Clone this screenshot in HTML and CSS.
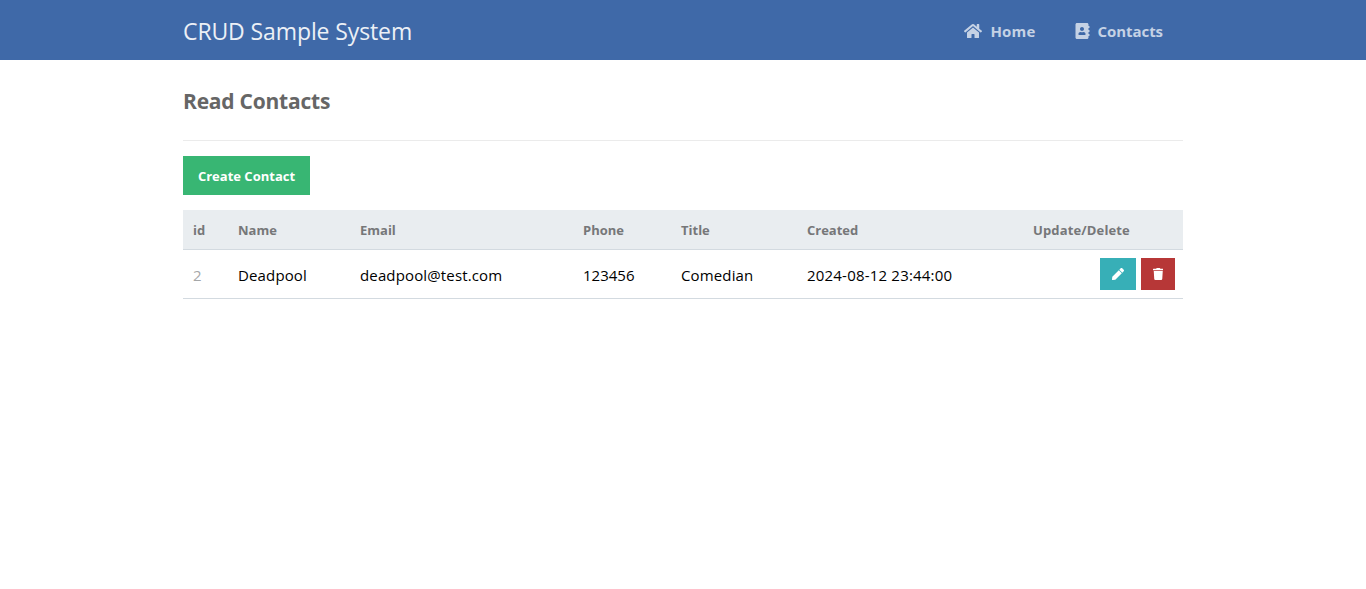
FILE: index.html
```html
<!DOCTYPE html>
<html lang="en">
<head>
<meta charset="utf-8">
<title>Read Contacts</title>
<link rel="stylesheet" href="styles.css">
</head>
<body>
<nav class="navtop">
  <div class="navtop-inner">
    <h1 class="brand">CRUD Sample System</h1>
    <a class="nav-link home" href="#"><svg class="icon-home" viewBox="0 0 576 512"><path d="M280.37 148.26L96 300.11V464a16 16 0 0 0 16 16l112.06-.29a16 16 0 0 0 15.92-16V368a16 16 0 0 1 16-16h64a16 16 0 0 1 16 16v95.64a16 16 0 0 0 16 16.05L464 480a16 16 0 0 0 16-16V300L295.67 148.26a12.19 12.19 0 0 0-15.3 0zM571.6 251.47L488 182.56V44.05a12 12 0 0 0-12-12h-56a12 12 0 0 0-12 12v72.61L318.47 43a48 48 0 0 0-61 0L4.34 251.47a12 12 0 0 0-1.6 16.9l25.5 31A12 12 0 0 0 45.15 301l235.22-193.74a12.19 12.19 0 0 1 15.3 0L530.9 301a12 12 0 0 0 16.9-1.6l25.5-31a12 12 0 0 0-1.7-16.93z"/></svg><span>Home</span></a>
    <a class="nav-link contacts" href="#"><svg class="icon-book" viewBox="0 0 448 512"><path d="M436 160c6.600 0 12-5.400 12-12v-40c0-6.600-5.400-12-12-12h-20V48c0-26.500-21.500-48-48-48H48C21.500 0 0 21.500 0 48v416c0 26.500 21.500 48 48 48h320c26.500 0 48-21.500 48-48v-48h20c6.600 0 12-5.400 12-12v-40c0-6.600-5.400-12-12-12h-20v-64h20c6.600 0 12-5.400 12-12v-40c0-6.600-5.400-12-12-12h-20v-64h20zm-228-32c35.300 0 64 28.700 64 64s-28.700 64-64 64-64-28.700-64-64 28.700-64 64-64zm112 236.800c0 10.600-10 19.200-22.400 19.200H118.400C106 384 96 375.400 96 364.800v-19.200c0-31.800 30.100-57.600 67.200-57.600h5c12.300 5.100 25.700 8 39.800 8s27.600-2.900 39.800-8h5c37.100 0 67.200 25.800 67.200 57.600v19.200z"/></svg><span>Contacts</span></a>
  </div>
</nav>
<main class="content">
  <h2 class="title"><span>Read Contacts</span></h2>
  <a class="create" href="#">Create Contact</a>
  <table class="contacts-table">
    <colgroup><col class="c-id"><col class="c-name"><col class="c-email"><col class="c-phone"><col class="c-title"><col class="c-created"><col></colgroup>
    <thead>
      <tr><th>id</th><th>Name</th><th>Email</th><th>Phone</th><th>Title</th><th>Created</th><th class="wide">Update/Delete</th></tr>
    </thead>
    <tbody>
      <tr>
        <td class="muted">2</td><td>Deadpool</td><td>deadpool@test.com</td><td class="phone">123456</td><td>Comedian</td><td class="date">2024-08-12 23:44:00</td>
        <td class="actions"><div class="buttons">
          <a class="btn edit" href="#"><svg class="icon-pen" viewBox="0 0 512 512"><path d="M290.74 93.24l128.02 128.02-277.99 277.99-114.14 12.6C11.35 513.54-1.56 500.62.14 485.34l12.7-114.22 277.9-277.88zm207.2-19.06l-60.11-60.11c-18.75-18.75-49.16-18.75-67.91 0l-56.55 56.55 128.02 128.02 56.55-56.55c18.75-18.76 18.75-49.16 0-67.91z"/></svg></a>
          <a class="btn trash" href="#"><svg class="icon-trash" viewBox="0 0 448 512"><path d="M432 32H312l-9.4-18.7A24 24 0 0 0 281.1 0H166.8a23.72 23.72 0 0 0-21.4 13.3L136 32H16A16 16 0 0 0 0 48v32a16 16 0 0 0 16 16h416a16 16 0 0 0 16-16V48a16 16 0 0 0-16-16zM53.2 467a48 48 0 0 0 47.9 45h245.8a48 48 0 0 0 47.9-45L416 128H32z"/></svg></a>
        </div></td>
      </tr>
    </tbody>
  </table>
</main>
</body>
</html>
```
FILE: styles.css
```css
* { box-sizing: border-box; }
body { margin: 0; background: #fff; font-family: "Segoe UI", "Open Sans", "Noto Sans", sans-serif; font-size: 15px; }
svg { display: block; fill: currentColor; }
a { text-decoration: none; }
.navtop { height: 60px; background: #3f69a8; }
.navtop-inner { width: 1000px; height: 60px; margin: 0 auto; display: flex; align-items: center; }
.brand { flex: 1; margin: 0; padding-top: 1px; font-size: 23px; line-height: 30px; font-weight: 400; letter-spacing: -0.11px; color: #ecf0f6; }
.nav-link { display: flex; align-items: center; padding: 2px 20px 0; color: #c5d2e5; font-size: 15px; font-weight: 700; }
.home { padding-right: 19px; letter-spacing: 0.2px; }
.contacts { letter-spacing: -0.07px; }
.icon-home { width: 18px; height: 16px; margin-right: 8px; }
.icon-book { width: 15px; height: 16px; margin-right: 8px; }
.content { width: 1000px; margin: 0 auto; }
.title { margin: 0 0 15px; height: 81px; padding-top: 26px; border-bottom: 1px solid #ebebeb; font-size: 21px; line-height: 30px; letter-spacing: -0.22px; color: #666; }
.create { display: flex; align-items: center; justify-content: center; width: 127px; height: 39px; margin-bottom: 15px; background: #38b673; color: #fff; font-size: 13px; font-weight: 700; padding-top: 1px; }
.contacts-table { width: 1000px; table-layout: fixed; border-collapse: separate; border-spacing: 0; }
.c-id { width: 45px; }
.c-name { width: 122px; }
.c-email { width: 223px; }
.c-phone { width: 98px; }
.c-title { width: 126px; }
.c-created { width: 226px; }
th { height: 40px; padding: 1px 10px 0; background: #e9edf0; border-bottom: 1px solid #d3dae0; color: #767779; font-size: 13px; text-align: left; }
.wide { letter-spacing: 0.14px; }
td { height: 49px; padding: 1px 10px 0; border-bottom: 1px solid #d3dae0; color: #000; letter-spacing: 0.14px; white-space: nowrap; }
.phone { letter-spacing: 0; }
.date { letter-spacing: 0.2px; }
.muted { color: #a5a7a9; }
.actions { padding: 0 8px 0 0; }
.buttons { display: flex; justify-content: flex-end; gap: 5px; }
.btn { height: 32px; padding: 10px 12px; color: #fff; }
.edit { width: 36px; background: #37afb7; }
.trash { width: 34px; padding-left: 11.5px; background: #b73737; }
.icon-pen { width: 12px; height: 12px; }
.icon-trash { width: 10.5px; height: 12px; }
```
